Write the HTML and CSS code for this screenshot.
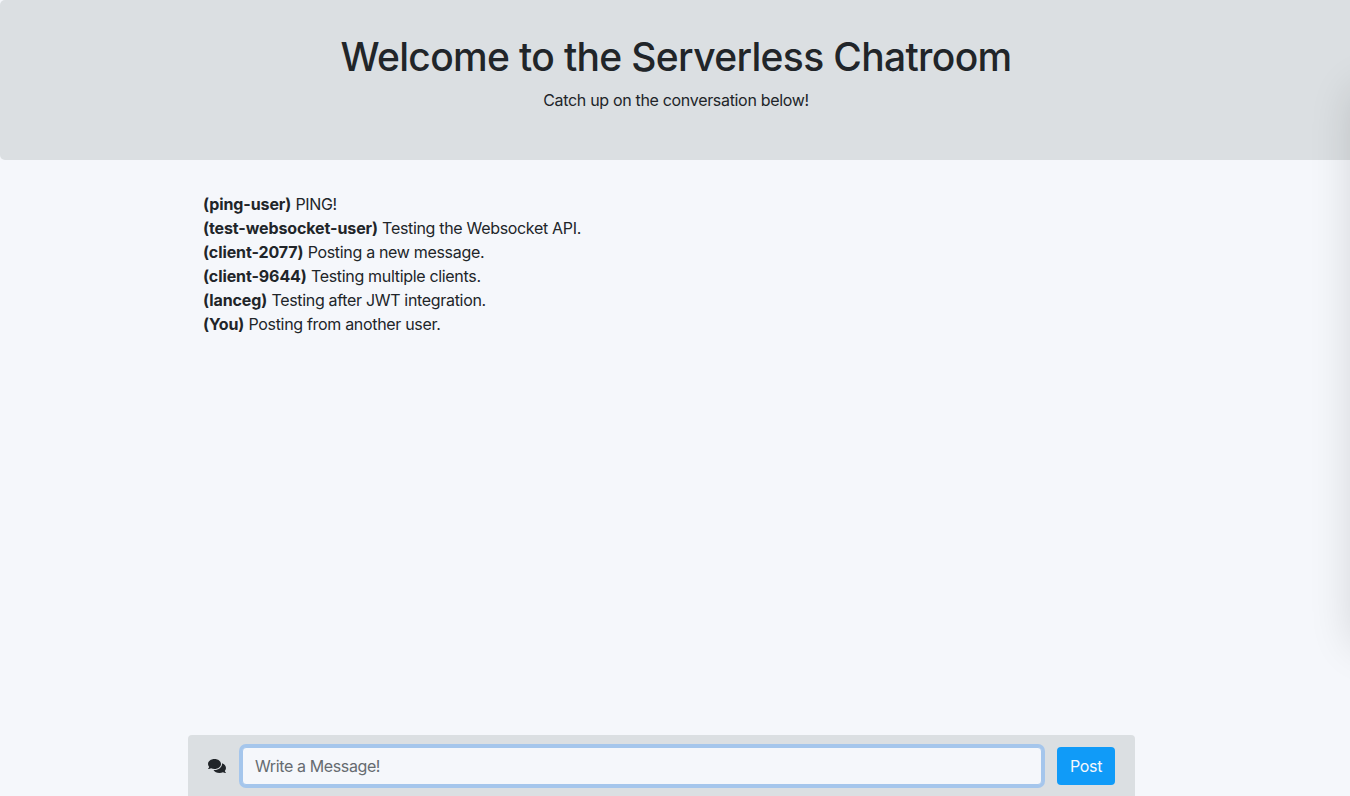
FILE: index.html
```html
<!DOCTYPE html>
<html lang="en">
<head>
<meta charset="utf-8">
<title>Serverless Chatroom</title>
<link rel="stylesheet" href="styles.css">
</head>
<body>
<div class="page">
  <header class="banner">
    <h1 class="banner-title">Welcome to the Serverless Chatroom</h1>
    <p class="banner-text">Catch up on the conversation below!</p>
  </header>
  <main class="messages">
    <div class="message"><b class="author">(ping-user)</b> PING!</div>
    <div class="message"><b class="author">(test-websocket-user)</b> Testing the Websocket API.</div>
    <div class="message"><b class="author">(client-2077)</b> Posting a new message.</div>
    <div class="message"><b class="author">(client-9644)</b> Testing multiple clients.</div>
    <div class="message"><b class="author">(lanceg)</b> Testing after JWT integration.</div>
    <div class="message"><b class="author">(You)</b> Posting from another user.</div>
  </main>
  <form class="composer">
    <svg class="icon" viewBox="0 0 576 512" aria-hidden="true"><path fill="currentColor" d="M416 192c0-88.4-93.1-160-208-160S0 103.6 0 192c0 34.3 14.1 65.9 38 92-13.4 30.2-35.5 54.2-35.8 54.5-2.2 2.3-2.8 5.7-1.5 8.7S4.8 352 8 352c36.6 0 66.9-12.3 88.7-25 32.2 15.7 70.3 25 111.3 25 114.9 0 208-71.6 208-160zm122 220c23.9-26 38-57.7 38-92 0-66.9-53.5-124.2-129.3-148.1.9 6.6 1.3 13.3 1.3 20.1 0 105.9-107.7 192-240 192-10.8 0-21.3-.8-31.7-1.9C207.8 439.6 281.8 480 368 480c41 0 79.1-9.2 111.3-25 21.8 12.7 52.1 25 88.7 25 3.2 0 6.1-1.9 7.3-4.8 1.3-2.9.7-6.3-1.5-8.7-.3-.3-22.4-24.2-35.8-54.5z"/></svg>
    <input class="field" type="text" placeholder="Write a Message!">
    <button class="post" type="button">Post</button>
  </form>
  <div class="edge-shade"></div>
</div>
</body>
</html>
```
FILE: styles.css
```css
* { box-sizing: border-box; }
body {
  margin: 0;
  font-family: Inter, "Liberation Sans", sans-serif;
  font-size: 16px;
  line-height: 24px;
  letter-spacing: -0.32px;
  color: #212529;
  background: #f5f7fb;
}
.page {
  position: relative;
  display: flex;
  flex-direction: column;
  height: 796px;
  overflow: hidden;
}
.banner {
  height: 160px;
  padding: 33px 0 0 2px;
  text-align: center;
  background: #dbdfe2;
  border-radius: 5px 0 0 5px;
}
.banner-title {
  margin: 0 0 7px;
  font-size: 39px;
  font-weight: 500;
  line-height: 48px;
  letter-spacing: -0.66px;
}
.banner-text { margin: 0; }
.messages {
  flex: 1;
  padding: 32px 203px 0;
}
.author {
  font-weight: 700;
  letter-spacing: -0.1px;
}
.composer {
  display: flex;
  align-items: center;
  width: 947px;
  height: 61px;
  margin-left: 188px;
  padding: 1px 20px 0;
  background: #dbdfe2;
  border-radius: 4px 4px 0 0;
}
.icon {
  width: 18px;
  height: 16px;
  margin-right: 16px;
}
.field {
  flex: 1;
  height: 38px;
  margin-right: 15px;
  padding: 0 12px;
  border: 1px solid #a5c6ec;
  border-radius: 4px;
  box-shadow: 0 0 0 3px #a5c6ec;
  font: inherit;
  letter-spacing: -0.38px;
  color: inherit;
  background: #f5f7fb;
  outline: 0;
}
.field::placeholder { color: #666b70; opacity: 1; }
.post {
  width: 58px;
  height: 38px;
  padding: 0;
  border: 0;
  border-radius: 4px;
  font: inherit;
  letter-spacing: inherit;
  color: #f5f7fb;
  background: #109bf8;
}
/* Soft shadow falling in from the right edge of the window */
.edge-shade {
  position: absolute;
  top: 90px;
  left: 1354px;
  width: 60px;
  height: 555px;
  border-radius: 12px;
  box-shadow: 0 0 44px 2px rgba(0, 0, 0, 0.14);
  pointer-events: none;
}
```
